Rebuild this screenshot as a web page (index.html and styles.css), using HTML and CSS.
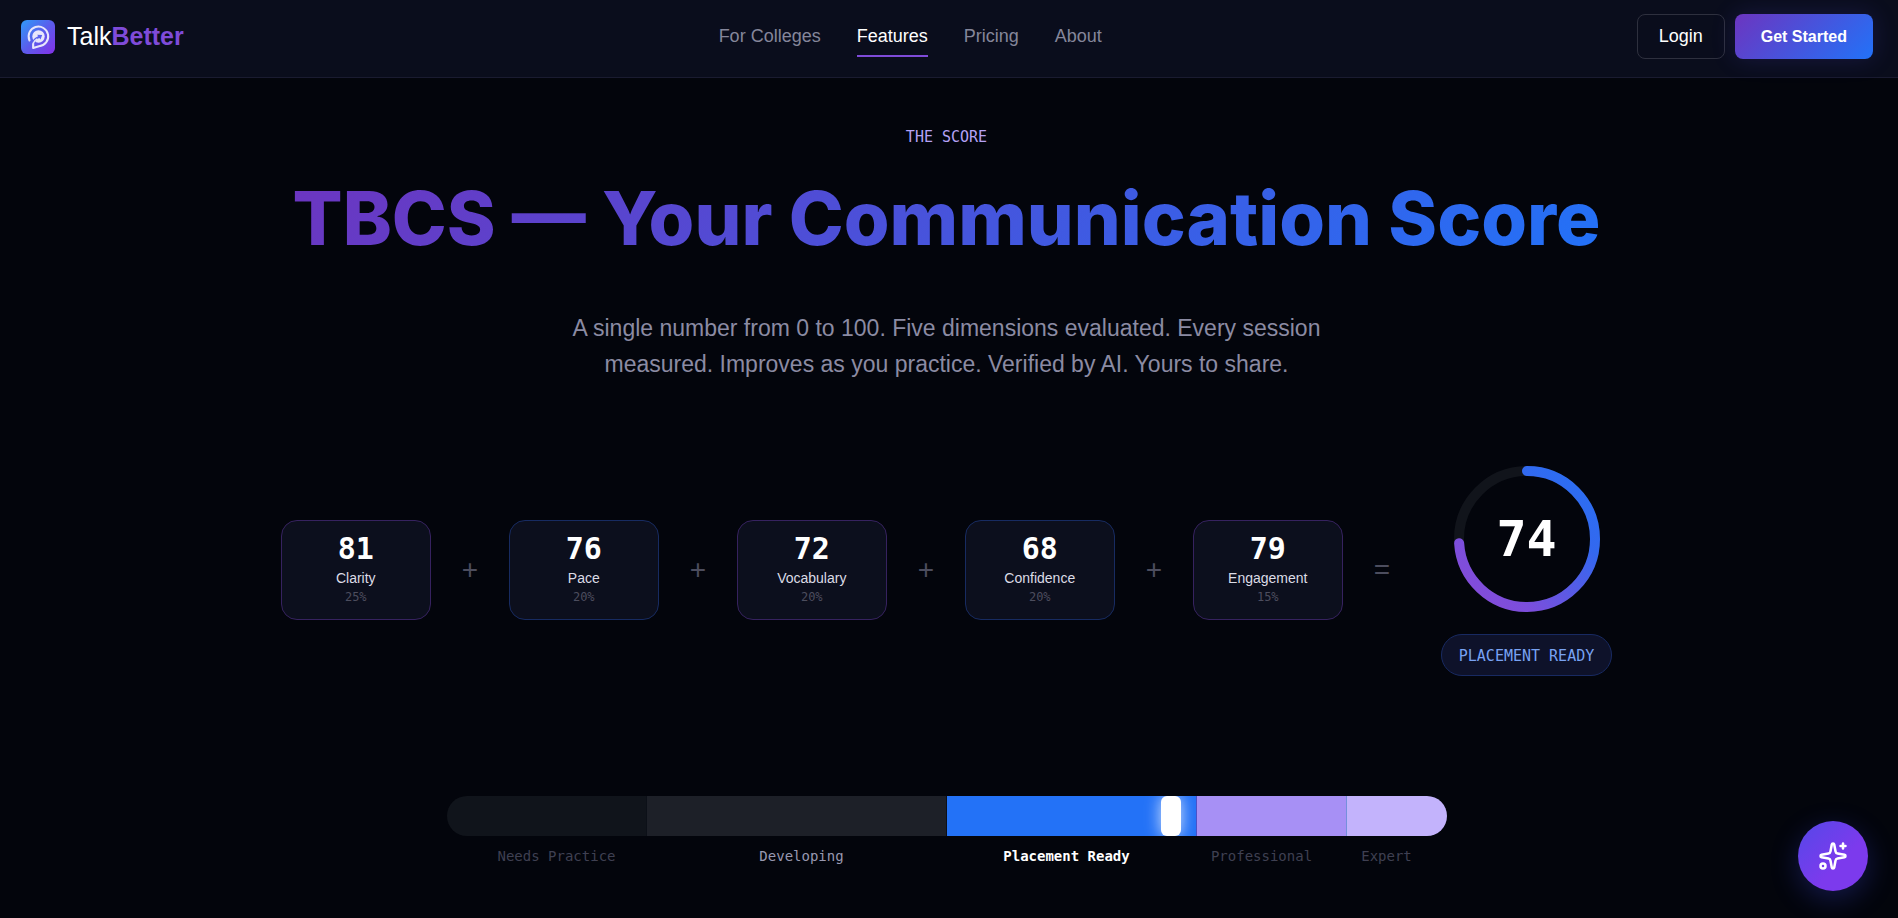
FILE: index.html
```html
<!DOCTYPE html>
<html lang="en">
<head>
    <meta charset="UTF-8">
    <meta name="viewport" content="width=device-width, initial-scale=1.0">
    <title>TalkBetter - Features</title>
    <link rel="stylesheet" href="styles.css">
</head>
<body>

    <header class="site-header">
        <a class="logo" href="index.html">
            <svg class="logo-mark" viewBox="0 0 34 34" aria-hidden="true">
                <defs>
                    <linearGradient id="logoGradient" x1="0" y1="0" x2="1" y2="1">
                        <stop offset="0" stop-color="#2f9bf8" />
                        <stop offset="0.5" stop-color="#5b5cec" />
                        <stop offset="1" stop-color="#8430e6" />
                    </linearGradient>
                </defs>
                <rect width="34" height="34" rx="6" fill="url(#logoGradient)" />
                <path d="M8.500 20.500A9.800 9.800 0 1 1 18 26.200L12.200 28v-5" fill="none" stroke="#e8e6fb" stroke-width="2" stroke-linecap="round" stroke-linejoin="round" />
                <circle cx="17.500" cy="16.500" r="6.200" fill="#e8e6fb" />
                <path d="M11 23.500c.6-3.500 2.600-6 6.200-7.200l-1-1.600 5 .3-1.700 4.600-1.100-1.500c-2.600 1-4 2.600-4.800 5.400z" fill="#5a62ee" />
                <path d="M12.200 28v-4.500c.8-2 2-3.400 3.600-4.300" fill="none" stroke="#e8e6fb" stroke-width="1.500" stroke-linecap="round" />
            </svg>
            <span class="logo-text">Talk<b>Better</b></span>
        </a>
        <nav class="main-nav">
            <a href="colleges.html">For Colleges</a>
            <a class="active" href="features.html">Features</a>
            <a href="pricing.html">Pricing</a>
            <a href="about.html">About</a>
        </nav>
        <div class="header-actions">
            <button type="button" class="btn btn-outline">Login</button>
            <button type="button" class="btn btn-primary">Get Started</button>
        </div>
    </header>

    <main class="content">
        <section class="intro">
            <p class="eyebrow">THE SCORE</p>
            <h1>TBCS — Your Communication Score</h1>
            <p class="lead">A single number from 0 to 100. Five dimensions evaluated. Every session measured. Improves as you practice. Verified by AI. Yours to share.</p>
        </section>

        <section class="formula">
            <div class="score-card">
                <span class="score-value">81</span>
                <span class="score-label">Clarity</span>
                <span class="score-weight">25%</span>
            </div>
            <span class="operator">+</span>
            <div class="score-card blue">
                <span class="score-value">76</span>
                <span class="score-label">Pace</span>
                <span class="score-weight">20%</span>
            </div>
            <span class="operator">+</span>
            <div class="score-card">
                <span class="score-value">72</span>
                <span class="score-label">Vocabulary</span>
                <span class="score-weight">20%</span>
            </div>
            <span class="operator">+</span>
            <div class="score-card blue">
                <span class="score-value">68</span>
                <span class="score-label">Confidence</span>
                <span class="score-weight">20%</span>
            </div>
            <span class="operator">+</span>
            <div class="score-card">
                <span class="score-value">79</span>
                <span class="score-label">Engagement</span>
                <span class="score-weight">15%</span>
            </div>
            <span class="operator">=</span>
            <div class="result">
                <div class="ring">
                    <svg viewBox="0 0 160 160" aria-hidden="true">
                        <defs>
                            <linearGradient id="ringGradient" x1="0" y1="0" x2="1" y2="1">
                                <stop offset="0" stop-color="#874bd8" />
                                <stop offset="0.25" stop-color="#7c4edc" />
                                <stop offset="0.7" stop-color="#3368ef" />
                                <stop offset="1" stop-color="#2970f3" />
                            </linearGradient>
                        </defs>
                        <circle class="ring-track" cx="80" cy="80" r="68" />
                        <circle class="ring-fill" cx="80" cy="80" r="68" pathLength="100" transform="rotate(-90 80 80)" />
                    </svg>
                    <span class="ring-value">74</span>
                </div>
                <span class="badge">PLACEMENT READY</span>
            </div>
        </section>

        <section class="scale">
            <div class="scale-bar">
                <span class="needs"></span>
                <span class="developing"></span>
                <span class="ready"></span>
                <span class="professional"></span>
                <span class="expert"></span>
                <i class="marker"></i>
            </div>
            <div class="scale-labels">
                <span>Needs Practice</span>
                <span class="passed">Developing</span>
                <span class="current">Placement Ready</span>
                <span>Professional</span>
                <span>Expert</span>
            </div>
        </section>
    </main>

    <button type="button" class="assistant-button" aria-label="Open assistant">
        <svg viewBox="0 0 24 24" aria-hidden="true">
            <path d="M11.017 2.814a1 1 0 0 1 1.966 0l1.051 5.558a2 2 0 0 0 1.594 1.594l5.558 1.051a1 1 0 0 1 0 1.966l-5.558 1.051a2 2 0 0 0-1.594 1.594l-1.051 5.558a1 1 0 0 1-1.966 0l-1.051-5.558a2 2 0 0 0-1.594-1.594l-5.558-1.051a1 1 0 0 1 0-1.966l5.558-1.051a2 2 0 0 0 1.594-1.594z" />
            <path d="M20 2v4" />
            <path d="M22 4h-4" />
            <circle cx="4" cy="20" r="2" />
        </svg>
    </button>

</body>
</html>
```
FILE: styles.css
```css
* {
    box-sizing: border-box;
}

body {
    margin: 0;
    background: #03050c;
    color: #fff;
    font-family: "Liberation Sans", Arial, sans-serif;
}

/* Header */
.site-header {
    display: flex;
    justify-content: space-between;
    align-items: center;
    padding: 14px 25px 18px 21px;
    background: #0a0d1c;
    border-bottom: 1px solid #1a1b30;
}

.logo {
    display: flex;
    align-items: center;
    gap: 12px;
    color: #fff;
    text-decoration: none;
    font-size: 25px;
}

    .logo b {
        color: #7f4bd9;
    }

.logo-mark {
    width: 34px;
    height: 34px;
}

.main-nav {
    display: flex;
    gap: 36px;
}

    .main-nav a {
        padding: 8px 0 7px;
        border-bottom: 2px solid transparent;
        color: #85869a;
        text-decoration: none;
        font-size: 18px;
        line-height: 24px;
    }

    .main-nav a.active {
        color: #fff;
        border-color: #7f4bd9;
    }

.header-actions {
    display: flex;
    gap: 10px;
}

.btn {
    height: 45px;
    border-radius: 8px;
    color: #fff;
    font-family: inherit;
    cursor: pointer;
}

.btn-outline {
    padding: 0 21px;
    background: transparent;
    border: 1px solid #2e303e;
    font-size: 18px;
}

.btn-primary {
    padding: 0 26px;
    background: linear-gradient(135deg, #6c35c0, #2272f8);
    border: none;
    box-shadow: 0 0 24px rgba(80, 70, 220, 0.2);
    font-size: 16px;
    font-weight: bold;
}

/* Intro */
.content {
    padding: 49px 5px 44px 0;
}

.intro {
    text-align: center;
}

.eyebrow {
    margin: 0;
    color: #b5a2f5;
    font-family: "DejaVu Sans Mono", monospace;
    font-size: 15px;
    line-height: 20px;
}

h1 {
    width: fit-content;
    margin: 29px auto 0;
    background: linear-gradient(135deg, #6c35c0, #2272f8);
    background-clip: text;
    -webkit-background-clip: text;
    color: transparent;
    font-family: Inter, sans-serif;
    font-size: 74px;
    font-weight: 800;
    line-height: 84px;
}

.lead {
    max-width: 760px;
    margin: 50px auto 0;
    color: #8b8ba3;
    font-size: 23px;
    line-height: 36px;
}

/* Score formula */
.formula {
    display: flex;
    justify-content: center;
    align-items: center;
    gap: 31px;
    margin-top: 77px;
}

.score-card {
    display: flex;
    flex-direction: column;
    align-items: center;
    width: 150px;
    padding: 13px 8px;
    background: #0c0f1d;
    border: 1px solid #36225f;
    border-radius: 16px;
}

    .score-card.blue {
        border-color: #172b61;
    }

.score-value {
    font-family: "DejaVu Sans Mono", monospace;
    font-size: 30px;
    font-weight: bold;
    line-height: 30px;
}

.score-label {
    margin-top: 4px;
    color: #dcdce6;
    font-size: 14px;
    line-height: 20px;
}

.score-weight {
    color: #4c4d5e;
    font-family: "DejaVu Sans Mono", monospace;
    font-size: 12px;
    line-height: 18px;
}

.operator {
    width: 16px;
    color: #4c4d5e;
    font-size: 28px;
    line-height: 28px;
}

.result {
    display: flex;
    flex-direction: column;
    align-items: center;
    gap: 15px;
    margin-left: 20px;
    padding-bottom: 4px;
}

.ring {
    display: grid;
    place-items: center;
}

    .ring svg,
    .ring-value {
        grid-area: 1 / 1;
    }

    .ring svg {
        width: 160px;
        height: 160px;
        fill: none;
        stroke-width: 10;
    }

.ring-track {
    stroke: #11141b;
}

.ring-fill {
    stroke: url(#ringGradient);
    stroke-dasharray: 74 100;
    stroke-linecap: round;
}

.ring-value {
    font-family: "DejaVu Sans Mono", monospace;
    font-size: 50px;
    font-weight: bold;
    line-height: 56px;
}

.badge {
    padding: 11px 17px 9px;
    background: #0e122a;
    border: 1px solid #182a62;
    border-radius: 21px;
    color: #78a2f2;
    font-family: "DejaVu Sans Mono", monospace;
    font-size: 15px;
    line-height: 20px;
}

/* Scale */
.scale {
    max-width: 1000px;
    margin: 116px auto 0;
}

.scale-bar {
    position: relative;
    display: grid;
    grid-template-columns: 20fr 30fr 25fr 15fr 10fr;
    height: 40px;
    border-radius: 20px;
    overflow: hidden;
}

    .scale-bar span {
        border-right: 1px solid #0c1018;
    }

    .scale-bar .needs {
        background: #10141b;
    }

    .scale-bar .developing {
        background: #1d2028;
    }

    .scale-bar .ready {
        background: #2372f7;
        border-color: #4a50c8;
    }

    .scale-bar .professional {
        background: #a790f5;
        border-color: #7590dc;
    }

    .scale-bar .expert {
        background: #c3b3fc;
        border: none;
    }

.marker {
    position: absolute;
    top: 0;
    left: 71.4%;
    width: 20px;
    height: 100%;
    background: #fff;
    border-radius: 6px;
    box-shadow: 0 0 16px rgba(255, 255, 255, 0.8);
}

.scale-labels {
    display: grid;
    grid-template-columns: 22fr 27fr 26fr 13fr 12fr;
    margin-top: 10px;
    color: #3f4052;
    font-family: "DejaVu Sans Mono", monospace;
    font-size: 14px;
    line-height: 20px;
    text-align: center;
    white-space: nowrap;
}

    .scale-labels .passed {
        color: #9898b0;
    }

    .scale-labels .current {
        color: #fff;
        font-weight: bold;
    }

/* Assistant */
.assistant-button {
    position: fixed;
    right: 30px;
    bottom: 27px;
    display: grid;
    place-items: center;
    width: 70px;
    height: 70px;
    padding: 0;
    background: linear-gradient(135deg, #5548e8, #7c3aed 60%);
    border: none;
    border-radius: 50%;
    box-shadow: 0 8px 28px rgba(60, 70, 220, 0.3);
    cursor: pointer;
}

    .assistant-button svg {
        width: 30px;
        height: 30px;
        fill: none;
        stroke: #fff;
        stroke-width: 2;
        stroke-linecap: round;
        stroke-linejoin: round;
    }
```
